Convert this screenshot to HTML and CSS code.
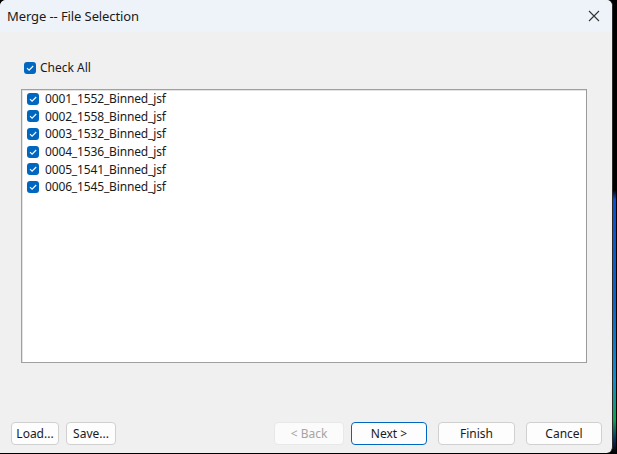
FILE: index.html
```html
<!DOCTYPE html>
<html>
<head>
<meta charset="utf-8">
<link rel="stylesheet" href="styles.css">
</head>
<body>
<div class="screen">
  <div class="window">
    <div class="titlebar">
      <span class="title">Merge -- File Selection</span>
      <span class="close">
        <svg width="12" height="12" viewBox="0 0 12 12"><path d="M1 1 L11 11 M11 1 L1 11" stroke="#333" stroke-width="1.1" fill="none"/></svg>
      </span>
    </div>
    <div class="content">
      <label class="checkall">
        <span class="cb"><svg width="12" height="12" viewBox="0 0 12 12"><path d="M3 6.2 L5.1 8.2 L9.2 4" stroke="#fff" stroke-width="1.1" fill="none"/></svg></span>
        <span>Check All</span>
      </label>
      <div class="listbox">
        <div class="item"><span class="cb"><svg width="12" height="12" viewBox="0 0 12 12"><path d="M3 6.2 L5.1 8.2 L9.2 4" stroke="#fff" stroke-width="1.1" fill="none"/></svg></span><span>0001_1552_Binned_jsf</span></div>
        <div class="item"><span class="cb"><svg width="12" height="12" viewBox="0 0 12 12"><path d="M3 6.2 L5.1 8.2 L9.2 4" stroke="#fff" stroke-width="1.1" fill="none"/></svg></span><span>0002_1558_Binned_jsf</span></div>
        <div class="item"><span class="cb"><svg width="12" height="12" viewBox="0 0 12 12"><path d="M3 6.2 L5.1 8.2 L9.2 4" stroke="#fff" stroke-width="1.1" fill="none"/></svg></span><span>0003_1532_Binned_jsf</span></div>
        <div class="item"><span class="cb"><svg width="12" height="12" viewBox="0 0 12 12"><path d="M3 6.2 L5.1 8.2 L9.2 4" stroke="#fff" stroke-width="1.1" fill="none"/></svg></span><span>0004_1536_Binned_jsf</span></div>
        <div class="item"><span class="cb"><svg width="12" height="12" viewBox="0 0 12 12"><path d="M3 6.2 L5.1 8.2 L9.2 4" stroke="#fff" stroke-width="1.1" fill="none"/></svg></span><span>0005_1541_Binned_jsf</span></div>
        <div class="item"><span class="cb"><svg width="12" height="12" viewBox="0 0 12 12"><path d="M3 6.2 L5.1 8.2 L9.2 4" stroke="#fff" stroke-width="1.1" fill="none"/></svg></span><span>0006_1545_Binned_jsf</span></div>
      </div>
      <div class="buttons">
        <button class="btn b-load">Load...</button>
        <button class="btn b-save">Save...</button>
        <span class="spacer"></span>
        <button class="btn b-back" disabled>&lt; Back</button>
        <button class="btn b-next">Next &gt;</button>
        <button class="btn b-finish">Finish</button>
        <button class="btn b-cancel">Cancel</button>
      </div>
    </div>
  </div>
  <div class="desktop"></div>
</div>
</body>
</html>
```
FILE: styles.css
```css
html, body {
  margin: 0;
  padding: 0;
  width: 617px;
  height: 454px;
  overflow: hidden;
  background: #000;
}
.screen {
  display: flex;
  width: 617px;
  height: 454px;
  font-family: "Noto Sans", "Open Sans", sans-serif;
  font-size: 12px;
  color: #1a1a1a;
}
.window {
  width: 613px;
  height: 453px;
  display: flex;
  flex-direction: column;
  background: #f0f0f0;
  border-right: 1px solid #2a2a2a;
  border-radius: 6px 6px 6px 0;
  overflow: hidden;
  box-sizing: border-box;
}
.titlebar {
  height: 32px;
  flex: none;
  background: #eef3f9;
  display: flex;
  align-items: center;
  justify-content: space-between;
  padding: 0 12px 0 7px;
}
.title {
  font-size: 13px;
  color: #1a1a1a;
  letter-spacing: -0.1px;
}
.close {
  display: flex;
  width: 12px;
  height: 12px;
}
.content {
  flex: 1;
  display: flex;
  flex-direction: column;
  padding: 29px 0 0 0;
}
.checkall {
  display: flex;
  align-items: center;
  gap: 4px;
  margin-left: 24px;
  height: 13px;
  line-height: 13px;
}
.cb {
  width: 12px;
  height: 12px;
  background: #0067c0;
  border-radius: 3px;
  display: flex;
  flex: none;
}
.listbox {
  margin: 15px 0 0 21px;
  width: 566px;
  height: 274px;
  box-sizing: border-box;
  background: #fff;
  border: 1px solid #a0a0a0;
  border-right-color: #9a9a9a;
  box-shadow: inset 1px 1px 0 #e3e3e3;
  padding-top: 0;
  letter-spacing: -0.15px;
}
.item {
  display: flex;
  align-items: center;
  gap: 6px;
  height: 17.6px;
  padding-left: 5px;
}
.buttons {
  display: flex;
  align-items: center;
  margin-top: 59px;
  padding: 0 11px 0 11px;
  width: 613px;
  box-sizing: border-box;
}
.spacer { flex: 1; }
.btn {
  font-family: "Noto Sans", "Open Sans", sans-serif;
  font-size: 12px;
  height: 23px;
  background: #fdfdfd;
  border: 1px solid #d0d0d0;
  border-radius: 4px;
  color: #1a1a1a;
  padding: 0;
  margin: 0;
}
.b-load { width: 48px; }
.b-save { width: 50px; margin-left: 7px; }
.b-back { width: 70px; color: #a5a5a5; border-color: #e8e8e8; background: #fbfbfb; }
.b-next { width: 76px; margin-left: 7px; border-color: #0067c0; }
.b-finish { width: 77px; margin-left: 11px; }
.b-cancel { width: 76px; margin-left: 11px; }
.desktop {
  width: 3px;
  height: 454px;
  background: linear-gradient(to bottom, #000 0px, #000 190px, #0a4fd0 200px, #0a63c8 300px, #0d8fd0 380px, #10a050 420px, #0a2a60 440px, #000 454px);
}
```
